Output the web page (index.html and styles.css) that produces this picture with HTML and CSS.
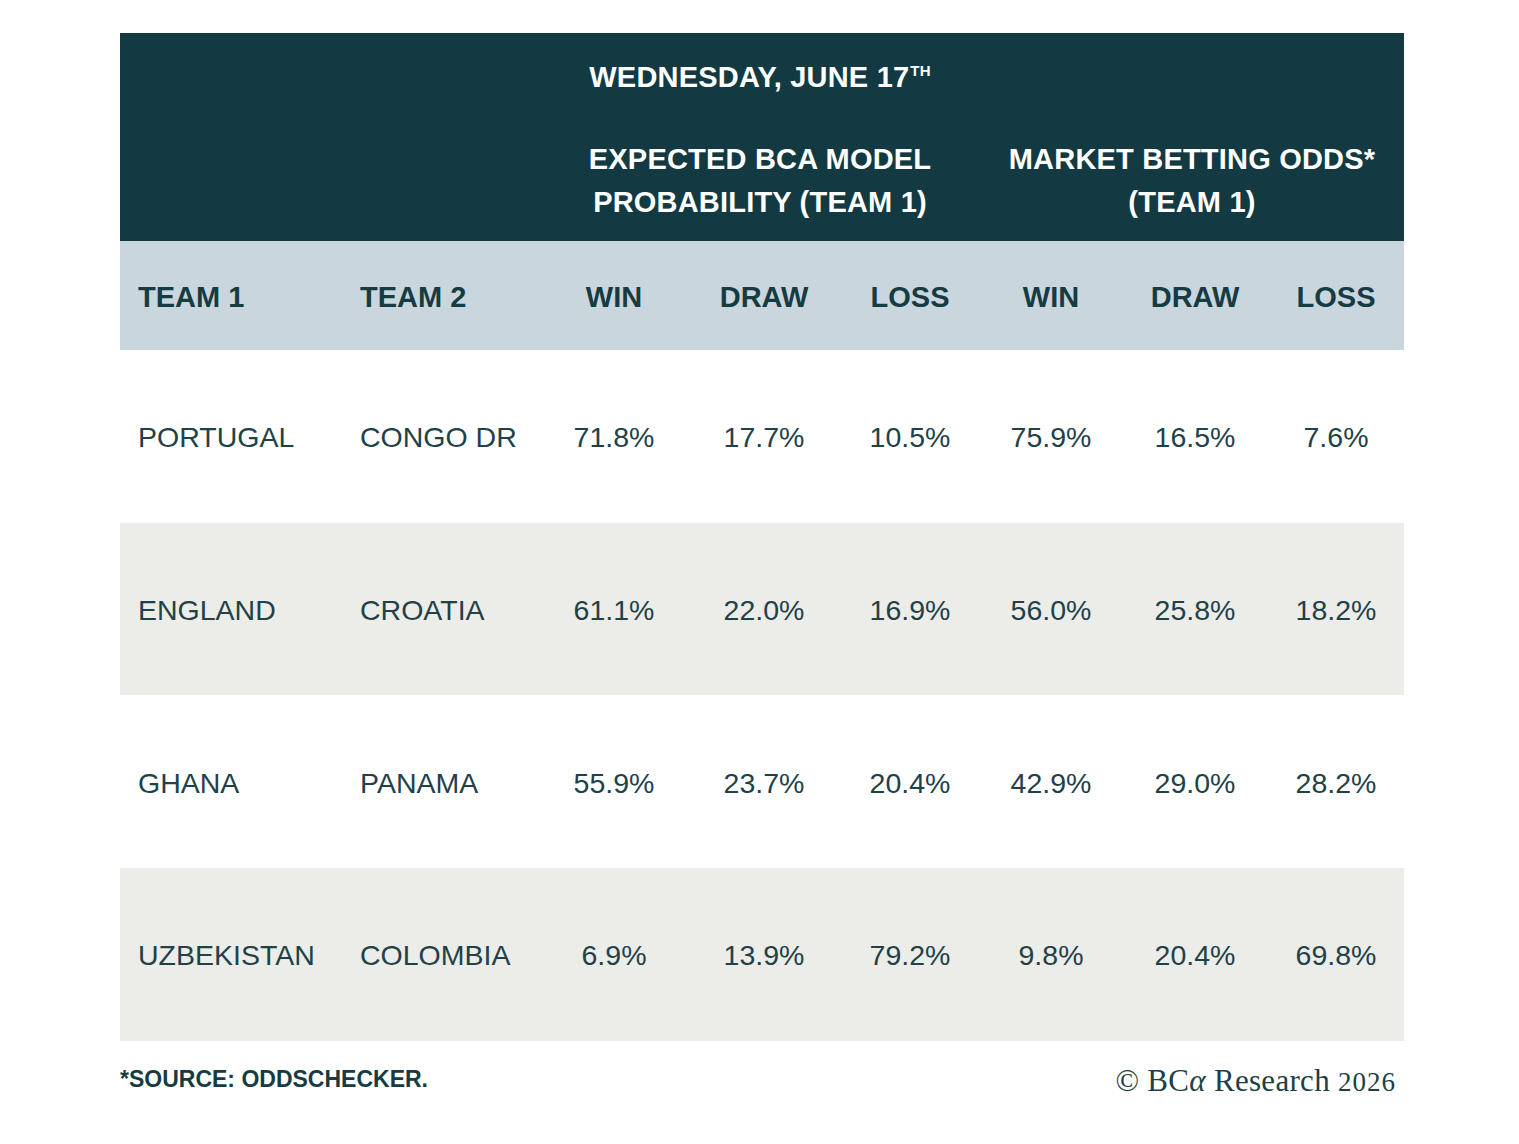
FILE: index.html
```html
<!DOCTYPE html>
<html lang="en">
<head>
<meta charset="utf-8">
<title>World Cup odds — Wednesday, June 17th</title>
<link rel="stylesheet" href="styles.css">
</head>
<body>
<main class="page">
  <table class="odds">
    <colgroup>
      <col class="c-team1">
      <col class="c-team2">
      <col class="c-win1">
      <col class="c-draw1">
      <col class="c-loss1">
      <col class="c-win2">
      <col class="c-draw2">
      <col class="c-loss2">
    </colgroup>
    <thead>
      <tr class="dark title-row">
        <th colspan="2" rowspan="2"></th>
        <th colspan="3" class="title">WEDNESDAY, JUNE 17<sup>TH</sup></th>
        <th colspan="3"></th>
      </tr>
      <tr class="dark group-row">
        <th colspan="3" class="group">EXPECTED BCA MODEL<br>PROBABILITY (TEAM 1)</th>
        <th colspan="3" class="group">MARKET BETTING ODDS*<br>(TEAM 1)</th>
      </tr>
      <tr class="sub-row">
        <th class="left">TEAM 1</th>
        <th class="left">TEAM 2</th>
        <th>WIN</th>
        <th>DRAW</th>
        <th>LOSS</th>
        <th>WIN</th>
        <th>DRAW</th>
        <th>LOSS</th>
      </tr>
    </thead>
    <tbody>
      <tr>
        <td class="left">PORTUGAL</td>
        <td class="left">CONGO DR</td>
        <td>71.8%</td><td>17.7%</td><td>10.5%</td>
        <td>75.9%</td><td>16.5%</td><td>7.6%</td>
      </tr>
      <tr class="alt">
        <td class="left">ENGLAND</td>
        <td class="left">CROATIA</td>
        <td>61.1%</td><td>22.0%</td><td>16.9%</td>
        <td>56.0%</td><td>25.8%</td><td>18.2%</td>
      </tr>
      <tr>
        <td class="left">GHANA</td>
        <td class="left">PANAMA</td>
        <td>55.9%</td><td>23.7%</td><td>20.4%</td>
        <td>42.9%</td><td>29.0%</td><td>28.2%</td>
      </tr>
      <tr class="alt">
        <td class="left">UZBEKISTAN</td>
        <td class="left">COLOMBIA</td>
        <td>6.9%</td><td>13.9%</td><td>79.2%</td>
        <td>9.8%</td><td>20.4%</td><td>69.8%</td>
      </tr>
    </tbody>
  </table>
  <footer class="foot">
    <p class="source">*SOURCE: ODDSCHECKER.</p>
    <p class="credit">© BC<span class="alpha">α</span> Research <span class="year">2026</span></p>
  </footer>
</main>
</body>
</html>
```

FILE: styles.css
```css
html, body {
  margin: 0;
  padding: 0;
  background: #ffffff;
}

body {
  font-family: "Liberation Sans", Arial, sans-serif;
  color: #1b3d44;
}

.page {
  width: 1284px;
  margin: 33px 0 0 120px;
}

.odds {
  width: 1284px;
  border-collapse: collapse;
  table-layout: fixed;
}

.c-team1 { width: 222px; }
.c-team2 { width: 198px; }
.c-win1  { width: 148px; }
.c-draw1 { width: 152px; }
.c-loss1 { width: 140px; }
.c-win2  { width: 142px; }
.c-draw2 { width: 146px; }
.c-loss2 { width: 136px; }

.odds th,
.odds td {
  padding: 0;
  text-align: center;
  vertical-align: middle;
}

.odds .left {
  text-align: left;
  padding-left: 18px;
}

.dark th {
  background: #133a42;
  color: #ffffff;
  font-weight: 700;
  font-size: 29px;
  letter-spacing: 0.2px;
}

.title-row {
  height: 88px;
}

.title {
  padding-top: 3px;
}

.title sup {
  font-size: 15px;
  vertical-align: 0;
  position: relative;
  top: -11px;
  margin-left: 1px;
}

.group-row {
  height: 120px;
}

.group {
  line-height: 43px;
  padding-bottom: 2px;
}

.sub-row {
  height: 109px;
}

.sub-row th {
  background: #c9d6de;
  color: #173b42;
  font-weight: 700;
  font-size: 29px;
  padding-top: 4px;
}

.odds tbody tr {
  height: 172.7px;
}

.odds tbody td {
  font-size: 28.5px;
  color: #1f4148;
  background: #ffffff;
  padding-top: 3px;
}

.odds tbody tr.alt td {
  background: #ecece8;
}

.foot {
  display: flex;
  justify-content: space-between;
  align-items: flex-start;
  margin-top: 24px;
  padding-right: 8px;
}

.foot p {
  margin: 0;
}

.source {
  font-weight: 700;
  font-size: 23px;
  line-height: 28px;
  color: #173b42;
}

.credit {
  font-family: "Liberation Serif", "Times New Roman", serif;
  font-size: 31px;
  line-height: 32px;
  color: #1d3f46;
  letter-spacing: 0.3px;
}

.alpha {
  font-style: italic;
}

.year {
  font-size: 27px;
  letter-spacing: 1px;
}
```
